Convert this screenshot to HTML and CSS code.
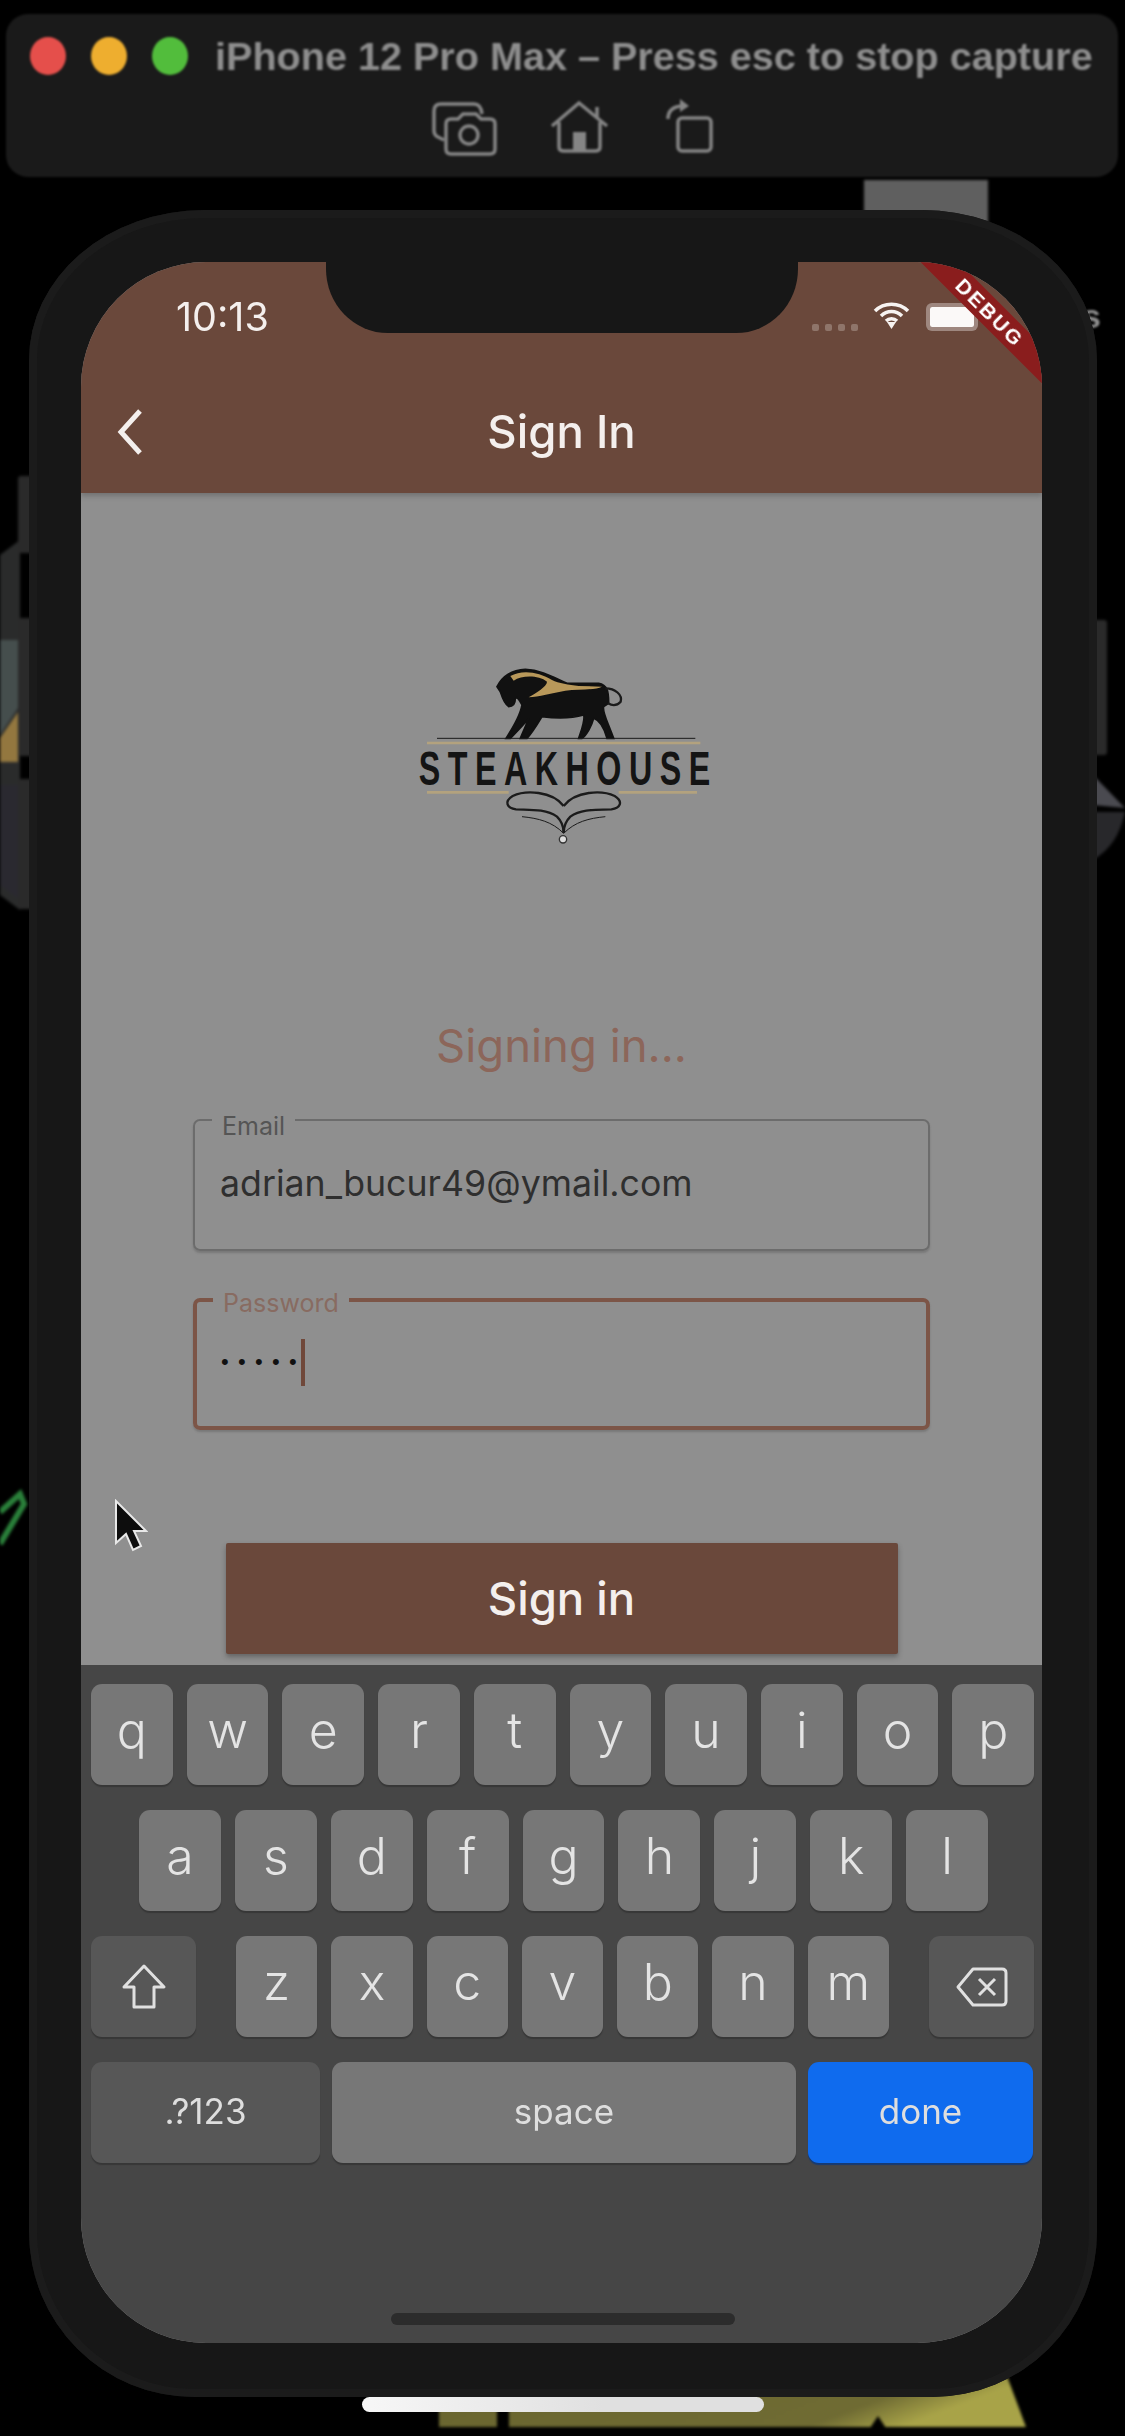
FILE: index.html
```html
<!DOCTYPE html>
<html lang="en">
<head>
<meta charset="utf-8">
<title>Sign In</title>
<link rel="stylesheet" href="styles.css">
</head>
<body>
<svg class="backdrop" viewBox="0 0 1125 2436" aria-hidden="true">
  <defs>
    <linearGradient id="olive" x1="0" y1="0" x2="1" y2="0.3">
      <stop offset="0" stop-color="#68642e"/><stop offset="0.85" stop-color="#6f6b33"/><stop offset="1" stop-color="#a8a348"/>
    </linearGradient>
  </defs>
  <rect x="864" y="180" width="124" height="44" fill="#5f5f5f"/>
  <path d="M0 555 L20 540 V910 L0 895Z" fill="#2a2b2b"/>
  <path d="M0 640 H20 V705 L0 735Z" fill="#454e4d"/>
  <path d="M0 738 L18 712 V762 H0Z" fill="#93773f"/>
  <path d="M0 785 H20 V900 L0 885Z" fill="#2a2930"/>
  <path d="M1093 775 L1125 808 L1093 805Z" fill="#4a4a50"/>
  <path d="M1093 812 L1125 812 C1120 835 1110 850 1093 860Z" fill="#28282b"/>
  <path d="M0 1512 L20 1494 L24 1504 L0 1544" fill="none" stroke="#34a048" stroke-width="6" opacity=".8"/>
  <path d="M439 2360 H1001 L1026 2427 H439Z" fill="url(#olive)"/>
  <rect x="497" y="2360" width="12" height="70" fill="#000"/>
  <path d="M870 2428 L878 2416 L886 2428Z" fill="#000"/>
  <rect x="18" y="476" width="16" height="77" rx="3" fill="#2a2a2a"/>
  <rect x="18" y="618" width="16" height="138" rx="3" fill="#2a2a2a"/>
  <rect x="18" y="779" width="16" height="130" rx="3" fill="#2a2a2a"/>
  <rect x="1090" y="620" width="17" height="135" rx="3" fill="#2a2a2a"/>
</svg>
<span class="stray-letter">s</span>

<header class="capture-bar">
  <div class="capture-title-row">
    <span class="light red"></span><span class="light amber"></span><span class="light green"></span>
    <span class="capture-title">iPhone 12 Pro Max – Press esc to stop capture</span>
  </div>
  <div class="capture-tools">
    <svg class="tool tool-camera" viewBox="20 12 70 58">
      <path d="M34 53 L28 50 Q24 48 24 44 V24 Q24 17 31 17 H64 Q71 17 72 27"/>
      <path d="M41 32 H48 L53 27 H66 L71 32 H80 Q85 32 85 37 V62 Q85 67 80 67 H41 Q36 67 36 62 V37 Q36 32 41 32Z"/>
      <circle cx="59" cy="48" r="9"/>
    </svg>
    <svg class="tool tool-home" viewBox="142 12 62 60">
      <path d="M145 41 L172 18 L200 41"/>
      <path d="M152 37 V62 Q152 66 157 66 H188 Q193 66 193 62 V37"/>
      <path d="M190 22 V33"/>
      <rect class="solid" x="166" y="47" width="13" height="19"/>
    </svg>
    <svg class="tool tool-rotate" viewBox="253 12 52 60">
      <rect x="268" y="33" width="33" height="33" rx="4"/>
      <path d="M258 34 Q258 22 272 21"/>
      <path class="solid" d="M270 14 L279 21 L270 27Z"/>
    </svg>
  </div>
</header>

<main class="phone">
  <div class="screen">
    <div class="appbar">
      <div class="status">
        <span class="time">10:13</span>
        <div class="status-icons">
          <span class="signal"><i></i><i></i><i></i><i></i></span>
          <svg class="wifi" viewBox="0 0 37 28">
            <path d="M2 10 C11 1 26 1 35 10" />
            <path d="M8 15 C14 9 23 9 29 15" />
            <path d="M13 20 C16 17 21 17 24 20" />
            <path class="wifi-tip" d="M14 21 L23 21 L18.5 28Z"/>
          </svg>
          <span class="battery"></span>
        </div>
      </div>
      <div class="titlebar">
        <svg class="back" viewBox="0 0 26 46"><path d="M23 2 L4 23 L23 44"/></svg>
        <h1 class="title">Sign In</h1>
      </div>
    </div>

    <div class="content">
      <svg class="logo" viewBox="0 0 1080 660">
        <path class="horse" d="M345 140 C360 110 390 90 430 88 C480 90 520 115 555 130 L650 130 C675 135 680 150 680 190 L665 200 C660 215 675 240 695 295 L675 295 C665 260 650 240 635 235 C630 255 615 285 600 295 L590 295 C600 265 610 240 605 225 C570 235 520 235 480 230 C465 255 445 285 435 295 L415 295 C425 270 435 250 440 235 C425 255 395 285 385 295 L372 295 C395 260 415 225 420 195 C410 175 405 170 400 175 C400 190 395 200 380 200 C365 190 360 170 355 155Z"/>
        <path class="horse-gold" d="M385 108 C420 88 470 95 510 120 C530 130 560 135 590 138 L660 140 C640 150 590 148 550 152 C510 160 470 170 440 172 C460 160 495 140 495 125 C470 105 420 105 395 122Z"/>
        <path class="ink" d="M670 145 C700 145 722 165 716 185 C705 197 690 197 678 190"/>
        <path class="ink thin" d="M165 295 H940"/>
        <path class="gold-line" d="M135 309 H955"/>
        <path class="gold-line" d="M135 457 H380 M710 457 H945"/>
        <text class="logo-word" transform="translate(110 436) scale(.663 1)">STEAKHOUSE</text>
        <path class="ink" d="M545 498 C510 452 430 450 392 468 C365 485 375 505 402 508 C440 510 490 505 525 530 C540 545 545 560 545 578"/>
        <path class="ink" d="M545 498 C580 452 660 450 698 468 C725 485 715 505 688 508 C650 510 600 505 565 530 C550 545 545 560 545 578"/>
        <path class="ink thin" d="M420 530 C470 535 510 545 545 580 C580 545 620 535 670 530"/>
        <circle class="drop" cx="543" cy="598" r="11"/>
      </svg>
      <p class="progress">Signing in...</p>
      <div class="field">
        <span class="field-label">Email</span>
        <span class="field-value">adrian_bucur49@ymail.com</span>
      </div>
      <div class="field field-active">
        <span class="field-label">Password</span>
        <span class="field-value"><span class="dots">•••••</span><i class="caret"></i></span>
      </div>
      <button class="submit" type="button">Sign in</button>
    </div>

    <div class="keyboard">
      <div class="row">
        <span class="key">q</span><span class="key">w</span><span class="key">e</span><span class="key">r</span><span class="key">t</span><span class="key">y</span><span class="key">u</span><span class="key">i</span><span class="key">o</span><span class="key">p</span>
      </div>
      <div class="row row-home">
        <span class="key">a</span><span class="key">s</span><span class="key">d</span><span class="key">f</span><span class="key">g</span><span class="key">h</span><span class="key">j</span><span class="key">k</span><span class="key">l</span>
      </div>
      <div class="row row-shift">
        <span class="key key-dark key-side">
          <svg class="glyph" viewBox="0 0 46 48"><path d="M23 3 L43 24 H33 V44 H13 V24 H3Z"/></svg>
        </span>
        <span class="letters">
          <span class="key">z</span><span class="key">x</span><span class="key">c</span><span class="key">v</span><span class="key">b</span><span class="key">n</span><span class="key">m</span>
        </span>
        <span class="key key-dark key-side">
          <svg class="glyph glyph-del" viewBox="0 0 54 42"><path d="M18 3 H47 Q51 3 51 7 V35 Q51 39 47 39 H18 L3 21Z"/><path d="M24 13 L40 29 M40 13 L24 29"/></svg>
        </span>
      </div>
      <div class="row row-bottom">
        <span class="key key-dark key-num">.?123</span>
        <span class="key key-space">space</span>
        <span class="key key-done">done</span>
      </div>
      <div class="sim-home"></div>
    </div>

    <div class="notch"></div>
    <div class="debug-ribbon">DEBUG</div>
  </div>
</main>

<svg class="pointer" viewBox="0 0 34 54"><path d="M2 2 V44 L12 35 L19 51 L27 47 L20 32 H32Z"/></svg>
<div class="os-home"></div>
</body>
</html>
```

FILE: styles.css
```css
* { box-sizing: border-box; }

html, body {
  margin: 0;
  width: 1125px;
  height: 2436px;
  background: #000;
  overflow: hidden;
}

body {
  position: relative;
  font-family: Inter, Roboto, "Liberation Sans", sans-serif;
  padding: 14px 7px 0 6px;
}

.backdrop {
  position: absolute;
  left: 0;
  top: 0;
  width: 1125px;
  height: 2436px;
  filter: blur(1.5px);
}

.stray-letter {
  position: absolute;
  left: 1082px;
  top: 296px;
  font: bold 34px/40px "Liberation Sans", sans-serif;
  color: #8f8f8f;
  filter: blur(.8px);
}

/* capture toolbar */
.capture-bar {
  position: relative;
  height: 163px;
  background: #1a1a1a;
  border-radius: 22px;
  padding-top: 23px;
  filter: blur(.8px);
}

.capture-title-row {
  display: flex;
  align-items: center;
  height: 38px;
  padding-left: 24px;
}

.light {
  width: 36px;
  height: 38px;
  border-radius: 50%;
  margin-right: 25px;
}
.red { background: #e54f4b; }
.amber { background: #eeae2f; }
.green { background: #52bd3c; }

.capture-title {
  margin-left: 2px;
  font: bold 39.6px/38px "Liberation Sans", sans-serif;
  color: #8e8e8e;
  white-space: nowrap;
}

.capture-tools {
  display: flex;
  margin-top: 22px;
  padding-left: 424px;
  align-items: flex-end;
}

.tool {
  fill: none;
  stroke: #858585;
  stroke-width: 3.5;
}
.tool .solid { fill: #858585; stroke: none; }
.tool-camera { width: 70px; height: 58px; }
.tool-home { width: 62px; height: 60px; margin-left: 49px; }
.tool-rotate { width: 52px; height: 60px; margin-left: 52px; }

/* phone */
.phone {
  position: relative;
  width: 1068px;
  height: 2187px;
  margin: 33px 0 0 23px;
  padding: 52px 55px 54px 52px;
  background: #171717;
  border-radius: 175px 175px 165px 165px / 150px 150px 165px 165px;
  box-shadow: inset 0 0 0 8px #1b1b1b;
}

.screen {
  position: relative;
  height: 2081px;
  display: flex;
  flex-direction: column;
  overflow: hidden;
  background: #8f8f8f;
  border-radius: 125px;
  filter: blur(.7px);
}

.appbar {
  height: 231px;
  flex: none;
  background: #6a483b;
  padding-top: 35px;
  box-shadow: 0 3px 5px rgba(60, 60, 60, .35);
  position: relative;
  z-index: 1;
}

.status {
  display: flex;
  justify-content: space-between;
  align-items: center;
  height: 40px;
  padding: 0 64px 0 95px;
}

.time {
  font: 400 39.5px/40px Inter, Roboto, sans-serif;
  color: #f4efed;
}

.status-icons {
  display: flex;
  align-items: center;
}

.signal {
  display: flex;
  gap: 6px;
  margin-top: 20px;
}
.signal i {
  width: 7px;
  height: 7px;
  border-radius: 2px;
  background: #8f756a;
}

.wifi {
  width: 37px;
  height: 28px;
  margin: -4px 16px 0 15px;
  fill: none;
  stroke: #f7f3f1;
  stroke-width: 3.5;
}
.wifi-tip { fill: #f7f3f1; stroke: none; }

.battery {
  width: 52px;
  height: 28px;
  border: 4px solid rgba(255, 255, 255, .35);
  border-radius: 6px;
  background: #fbf9f8 content-box;
}

.titlebar {
  display: grid;
  grid-template-columns: 1fr auto 1fr;
  align-items: center;
  margin-top: 72px;
  height: 46px;
}

.back {
  width: 26px;
  height: 46px;
  margin-left: 36px;
  fill: none;
  stroke: #f4efed;
  stroke-width: 5;
}

.title {
  margin: 0;
  font: 500 45.5px/46px Inter, Roboto, sans-serif;
  color: #f4efed;
}

.content {
  flex: 1;
  min-height: 0;
  display: flex;
  flex-direction: column;
  align-items: center;
  padding-top: 147px;
}

.logo {
  width: 360px;
  height: 220px;
  flex: none;
  overflow: visible;
}
.horse { fill: #111; stroke: #111; stroke-width: 5; }
.horse-gold { fill: #b8985a; }
.ink { fill: none; stroke: #1b1b1b; stroke-width: 7; }
.ink.thin { stroke-width: 3; }
.gold-line { fill: none; stroke: #b3a27e; stroke-width: 8; }
.drop { fill: #ddd; stroke: #333; stroke-width: 4; }
.logo-word {
  font: bold 146px "Liberation Sans", sans-serif;
  letter-spacing: 34px;
  fill: #141414;
}

.progress {
  margin: 158px 0 0;
  height: 56px;
  font: 400 45.5px/56px Inter, Roboto, sans-serif;
  color: #8c665a;
}

.field {
  position: relative;
  width: 737px;
  height: 132px;
  margin-top: 45px;
  border: 2.5px solid #6c6c6c;
  border-radius: 7px;
  display: flex;
  align-items: flex-start;
  padding: 37px 0 0 25px;
  box-shadow: 0 2px 2px rgba(70, 70, 70, .3);
}

.field-active {
  margin-top: 47px;
  border: 4px solid #7c5547;
  padding: 35px 0 0 24px;
}

.field-label {
  position: absolute;
  left: 17px;
  top: -9.5px;
  padding: 0 10px;
  background: #8f8f8f;
  font: 400 25px/28px Inter, Roboto, sans-serif;
  color: #555;
}

.field-active .field-label {
  left: 16px;
  top: -13px;
  color: #886b61;
}

.field-value {
  display: flex;
  align-items: center;
  height: 50px;
  font: 400 35.7px/50px Inter, Roboto, sans-serif;
  color: #2f2f2f;
}

.dots {
  font: 400 22px/50px "Liberation Sans", sans-serif;
  letter-spacing: 9.3px;
  color: #111;
}

.caret {
  width: 4px;
  height: 47px;
  margin-left: -5px;
  background: #70483a;
}

.submit {
  width: 672px;
  height: 111px;
  flex: none;
  margin-top: 113px;
  border: 0;
  border-radius: 2px;
  background: #6a483b;
  box-shadow: 0 3px 5px rgba(50, 50, 50, .45);
  font: 500 45.5px/46px Inter, Roboto, sans-serif;
  color: #f4efed;
}

/* keyboard */
.keyboard {
  flex: none;
  position: relative;
  height: 678px;
  padding: 19px 8px 0 10px;
  background: #464646;
  display: flex;
  flex-direction: column;
  gap: 25px;
}

.row {
  display: flex;
  gap: 14px;
  height: 101px;
}

.row-home { padding: 0 46px 0 48px; }

.row-shift { justify-content: space-between; gap: 0; }
.letters { display: flex; gap: 14px; width: 653px; }
.row-bottom { gap: 12px; }

.key {
  flex: 1;
  display: flex;
  align-items: center;
  justify-content: center;
  padding-bottom: 10px;
  background: #777;
  border-radius: 11px;
  box-shadow: 0 2px 1px #373737;
  font: 300 50px/60px Inter, Roboto, sans-serif;
  color: #e4e4e4;
}

.key-dark { background: #575757; }
.key-side { flex: none; width: 105px; padding-bottom: 0; }

.glyph {
  width: 46px;
  height: 48px;
  fill: none;
  stroke: #e0e0e0;
  stroke-width: 3;
  stroke-linejoin: round;
}
.glyph-del { width: 54px; height: 42px; }

.key-num,
.key-space,
.key-done {
  padding-bottom: 4px;
  font: 400 35px/44px Inter, Roboto, sans-serif;
  color: #dedede;
}
.key-num { flex: none; width: 229px; }
.key-space { flex: none; width: 464px; }
.key-done {
  flex: none;
  width: 225px;
  background: #0f6bee;
  box-shadow: 0 2px 1px #163a73;
}

.sim-home {
  position: absolute;
  left: 310px;
  bottom: 18px;
  width: 344px;
  height: 12px;
  border-radius: 6px;
  background: #2c2c2c;
}

/* overlays */
.notch {
  position: absolute;
  left: 245px;
  top: 0;
  width: 472px;
  height: 71px;
  background: #171717;
  border-radius: 0 0 62px 62px / 0 0 64px 64px;
  z-index: 2;
}

.debug-ribbon {
  position: absolute;
  left: 789px;
  top: 37px;
  width: 240px;
  height: 27px;
  background: #8a1d1d;
  transform: rotate(45deg);
  text-align: center;
  font: bold 21px/27px "Liberation Sans", sans-serif;
  letter-spacing: 2.2px;
  color: #fff;
  z-index: 3;
}

.pointer {
  position: absolute;
  left: 114px;
  top: 1499px;
  width: 34px;
  height: 54px;
  fill: #0d0d0d;
  stroke: #e8e8e8;
  stroke-width: 2;
}

.os-home {
  position: absolute;
  left: 362px;
  top: 2397px;
  width: 402px;
  height: 15px;
  border-radius: 8px;
  background: linear-gradient(90deg, #f7f7f7, #e0e0e0 60%);
}
```
